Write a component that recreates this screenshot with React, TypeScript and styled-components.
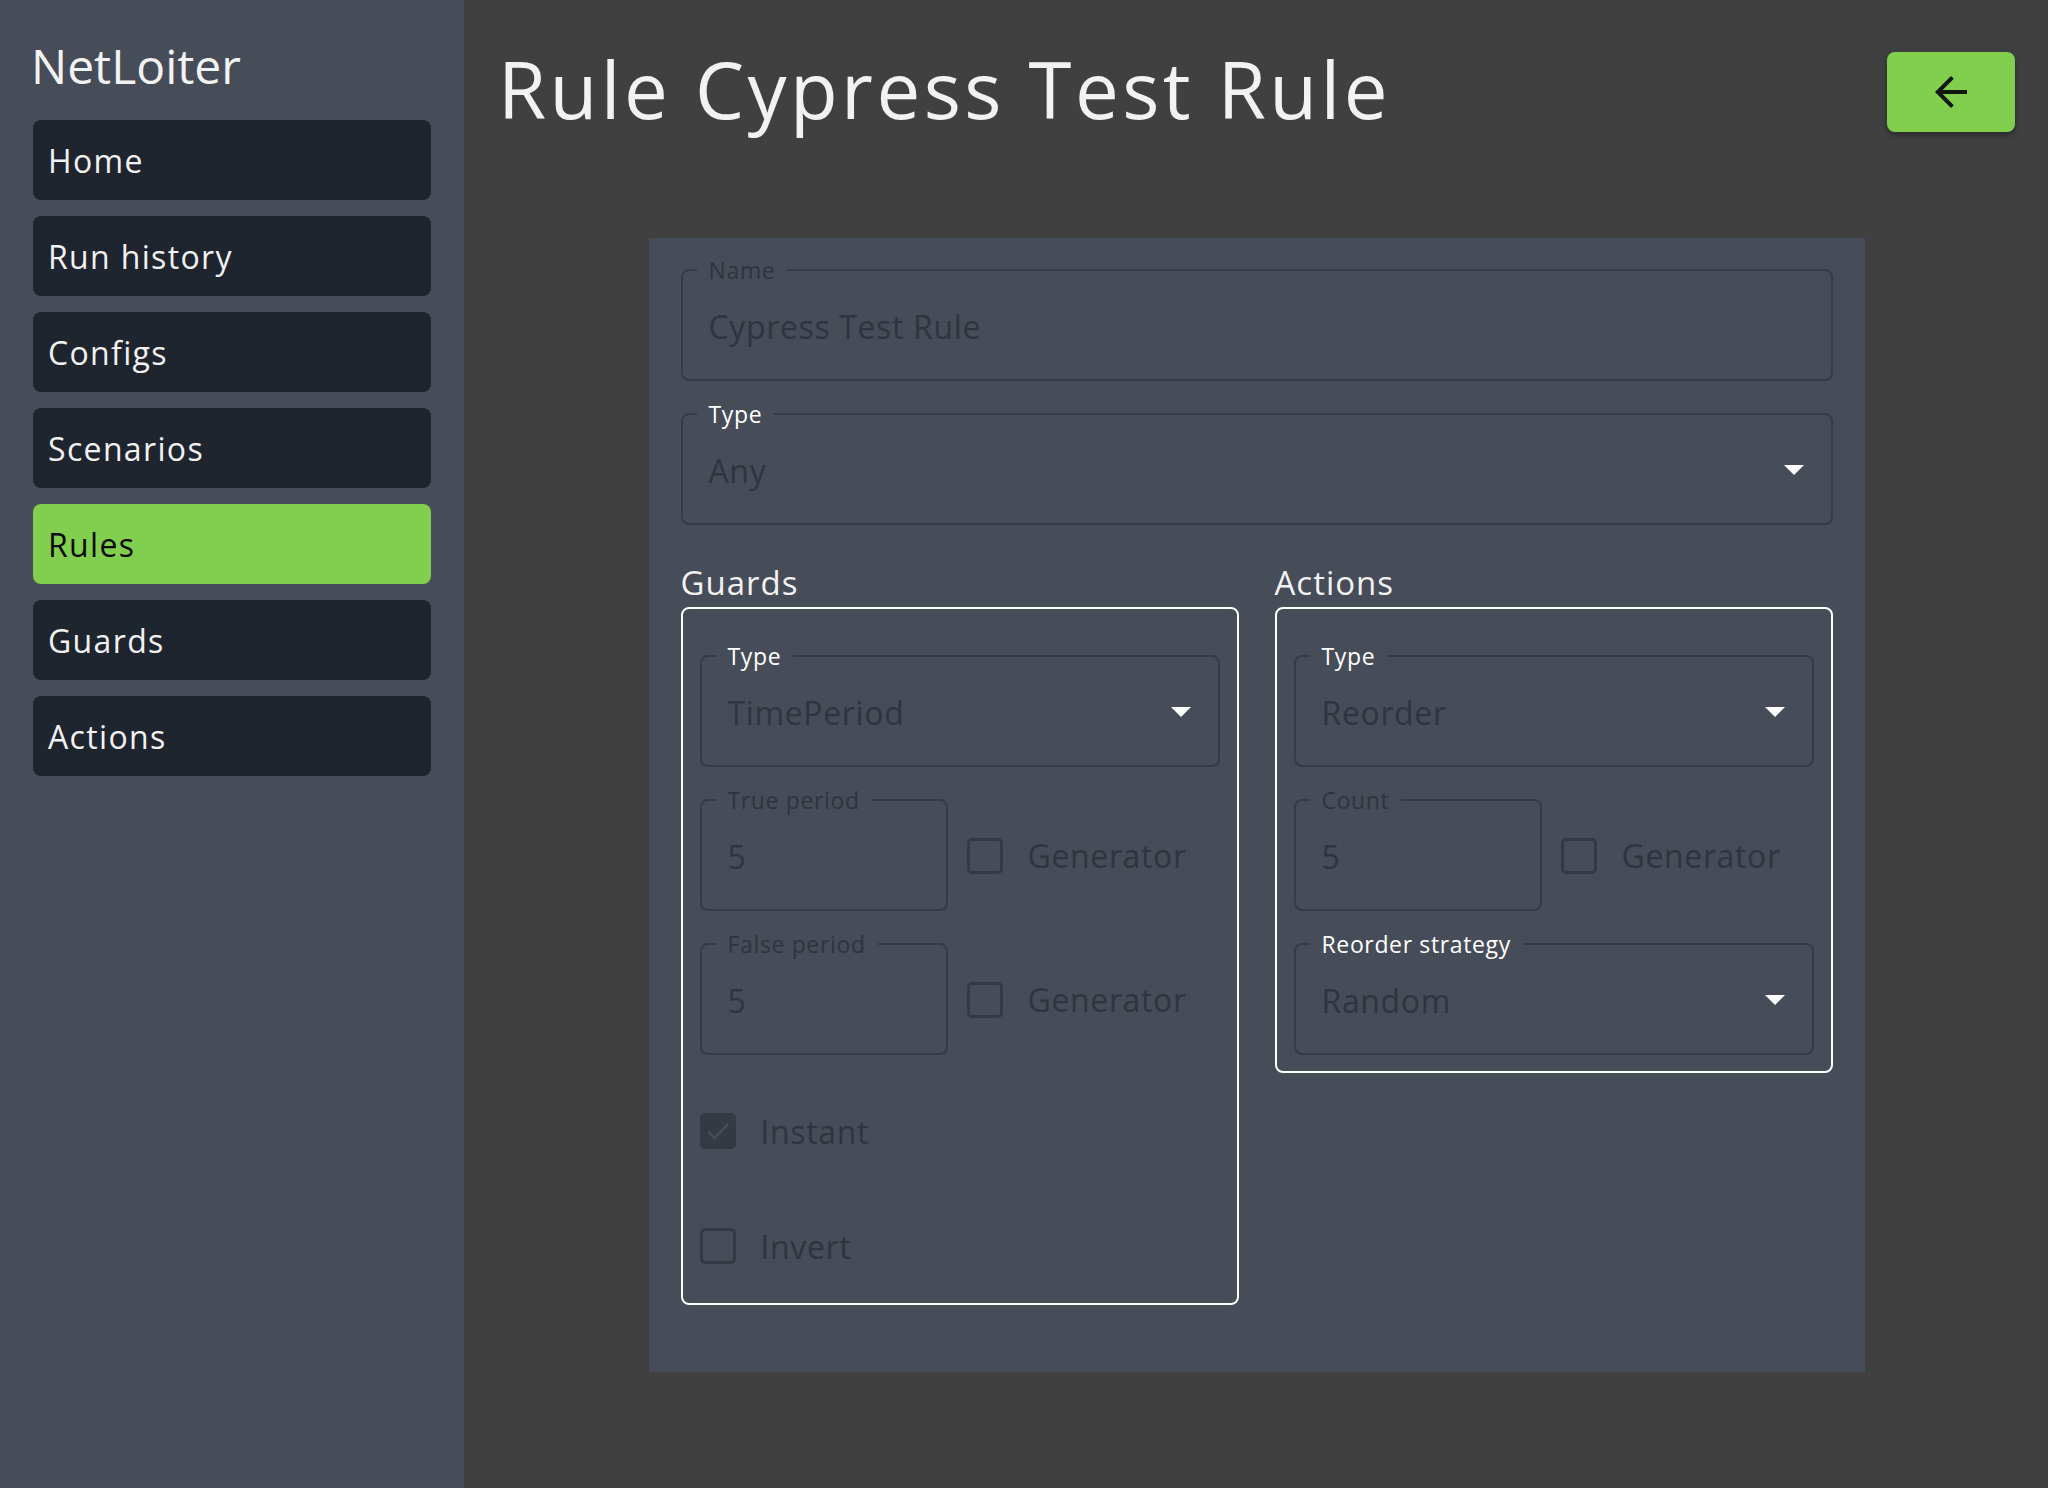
import React from "react";
import styled, { createGlobalStyle } from "styled-components";

const FONT = `"Open Sans", "Noto Sans", "Liberation Sans", sans-serif`;

const Global = createGlobalStyle`
  html, body { margin: 0; padding: 0; }
  body {
    background: #404040;
    font-family: ${FONT};
    color: #f2f2f2;
    letter-spacing: 0.04em;
  }
  * { box-sizing: border-box; }
`;

const Shell = styled.div`
  display: flex;
  min-height: 1488px;
`;

const Sidebar = styled.aside`
  width: 464px;
  flex: 0 0 464px;
  background: #464c58;
  padding: 37px 33px 0;
  display: flex;
  flex-direction: column;
`;

const Brand = styled.div`
  font-size: 48px;
  line-height: 57px;
  color: #f2f2f2;
  margin: 0 0 26px -2px;
  letter-spacing: 0;
`;

const NavList = styled.nav`
  display: flex;
  flex-direction: column;
  gap: 16px;
`;

const NavItem = styled.div<{ $active?: boolean }>`
  height: 80px;
  border-radius: 8px;
  display: flex;
  align-items: center;
  padding-left: 15px;
  font-size: 32px;
  letter-spacing: 0.042em;
  background: ${(p) => (p.$active ? "#82cf50" : "#1f252e")};
  color: ${(p) => (p.$active ? "#0a0a0a" : "#f2f2f2")};
`;

const Main = styled.main`
  flex: 1;
  display: flex;
  flex-direction: column;
  padding: 52px 33px 0 34px;
`;

const HeaderRow = styled.header`
  display: flex;
  align-items: flex-start;
  justify-content: space-between;
`;

const Title = styled.h1`
  margin: -3px 0 0;
  font-weight: 400;
  font-size: 78px;
  line-height: 80px;
  letter-spacing: 0.044em;
  color: #f2f2f2;
`;

const BackButton = styled.button`
  width: 128px;
  height: 80px;
  border: none;
  border-radius: 8px;
  background: #82cf50;
  box-shadow: 0 3px 6px rgba(0, 0, 0, 0.35);
  display: flex;
  align-items: center;
  justify-content: center;
  padding: 0;
  cursor: pointer;
`;

const Card = styled.section`
  width: 1216px;
  align-self: center;
  margin-top: 106px;
  background: #464c58;
  padding: 20px 32px 67px;
  display: flex;
  flex-direction: column;
  gap: 21px;
`;

const Field = styled.fieldset<{ $width?: number }>`
  margin: 0;
  min-width: 0;
  padding: 0 26px 9px;
  border: 2px solid #363c46;
  border-radius: 8px;
  width: ${(p) => (p.$width ? `${p.$width}px` : "100%")};
  flex: 0 0 auto;
`;

const FieldBody = styled.div`
  height: 88px;
  display: flex;
  align-items: center;
  justify-content: space-between;
`;

const Legend = styled.legend<{ $light?: boolean }>`
  font-size: 23px;
  line-height: 24px;
  padding: 0 12px;
  margin-left: -12px;
  color: ${(p) => (p.$light ? "#ffffff" : "#2f353e")};
`;

const Value = styled.span`
  font-size: 32px;
  color: #2f353e;
  white-space: nowrap;
`;

const Caret = styled.span`
  width: 0;
  height: 0;
  border-left: 10px solid transparent;
  border-right: 10px solid transparent;
  border-top: 10px solid #ffffff;
  margin-right: 1px;
`;

const Columns = styled.div`
  display: grid;
  grid-template-columns: 1fr 1fr;
  column-gap: 36px;
  align-items: start;
  margin-top: 17px;
`;

const Column = styled.div`
  display: flex;
  flex-direction: column;
`;

const SectionTitle = styled.h2`
  margin: 0 0 4px;
  font-weight: 400;
  font-size: 33px;
  line-height: 40px;
  letter-spacing: 0.03em;
  color: #f2f2f2;
`;

const Box = styled.div`
  border: 2px solid #ffffff;
  border-radius: 8px;
  padding: 35px 17px 16px;
  display: flex;
  flex-direction: column;
  gap: 21px;
`;

const InlineRow = styled.div`
  display: flex;
  align-items: center;
`;

const CheckLabel = styled.label<{ $offset?: number }>`
  display: flex;
  align-items: center;
  gap: 25px;
  font-size: 32px;
  color: #2f353e;
  margin-left: ${(p) => p.$offset ?? 0}px;
  padding-top: ${(p) => (p.$offset ? 12 : 0)}px;
`;

const CheckGroup = styled.div`
  display: flex;
  flex-direction: column;
  gap: 43px;
  margin: 19px 0 5px;
`;

const CheckRow = styled.div`
  height: 72px;
  display: flex;
  align-items: center;
`;

const Box36 = styled.span<{ $checked?: boolean }>`
  width: 36px;
  height: 36px;
  flex: 0 0 36px;
  border-radius: 5px;
  border: 3px solid #343a44;
  background: ${(p) => (p.$checked ? "#343a44" : "transparent")};
  display: flex;
  align-items: center;
  justify-content: center;
`;

function Check({ checked }: { checked?: boolean }) {
  return (
    <Box36 $checked={checked}>
      {checked && (
        <svg width="30" height="30" viewBox="0 0 24 24">
          <path d="M9 16.17 4.83 12l-1.42 1.41L9 19 21 7l-1.41-1.41z" fill="#464c58" />
        </svg>
      )}
    </Box36>
  );
}

function TextField({ label, value, light, width }: { label: string; value: string; light?: boolean; width?: number }) {
  return (
    <Field $width={width}>
      <Legend $light={light}>{label}</Legend>
      <FieldBody>
        <Value>{value}</Value>
      </FieldBody>
    </Field>
  );
}

function SelectField({ label, value }: { label: string; value: string }) {
  return (
    <Field>
      <Legend $light>{label}</Legend>
      <FieldBody>
        <Value>{value}</Value>
        <Caret />
      </FieldBody>
    </Field>
  );
}

function NumberWithGenerator({ label, value }: { label: string; value: string }) {
  return (
    <InlineRow>
      <TextField label={label} value={value} width={248} />
      <CheckLabel $offset={19}>
        <Check />
        Generator
      </CheckLabel>
    </InlineRow>
  );
}

const nav = ["Home", "Run history", "Configs", "Scenarios", "Rules", "Guards", "Actions"];

export default function App() {
  return (
    <>
      <Global />
      <Shell>
        <Sidebar>
          <Brand>NetLoiter</Brand>
          <NavList>
            {nav.map((n) => (
              <NavItem key={n} $active={n === "Rules"}>
                {n}
              </NavItem>
            ))}
          </NavList>
        </Sidebar>
        <Main>
          <HeaderRow>
            <Title>Rule Cypress Test Rule</Title>
            <BackButton aria-label="Back">
              <svg width="48" height="48" viewBox="0 0 24 24">
                <path d="M20 11H7.83l5.59-5.59L12 4l-8 8 8 8 1.41-1.41L7.83 13H20v-2z" fill="#111611" />
              </svg>
            </BackButton>
          </HeaderRow>
          <Card>
            <TextField label="Name" value="Cypress Test Rule" />
            <SelectField label="Type" value="Any" />
            <Columns>
              <Column>
                <SectionTitle>Guards</SectionTitle>
                <Box>
                  <SelectField label="Type" value="TimePeriod" />
                  <NumberWithGenerator label="True period" value="5" />
                  <NumberWithGenerator label="False period" value="5" />
                  <CheckGroup>
                    <CheckRow>
                      <CheckLabel>
                        <Check checked />
                        Instant
                      </CheckLabel>
                    </CheckRow>
                    <CheckRow>
                      <CheckLabel>
                        <Check />
                        Invert
                      </CheckLabel>
                    </CheckRow>
                  </CheckGroup>
                </Box>
              </Column>
              <Column>
                <SectionTitle>Actions</SectionTitle>
                <Box>
                  <SelectField label="Type" value="Reorder" />
                  <NumberWithGenerator label="Count" value="5" />
                  <SelectField label="Reorder strategy" value="Random" />
                </Box>
              </Column>
            </Columns>
          </Card>
        </Main>
      </Shell>
    </>
  );
}
